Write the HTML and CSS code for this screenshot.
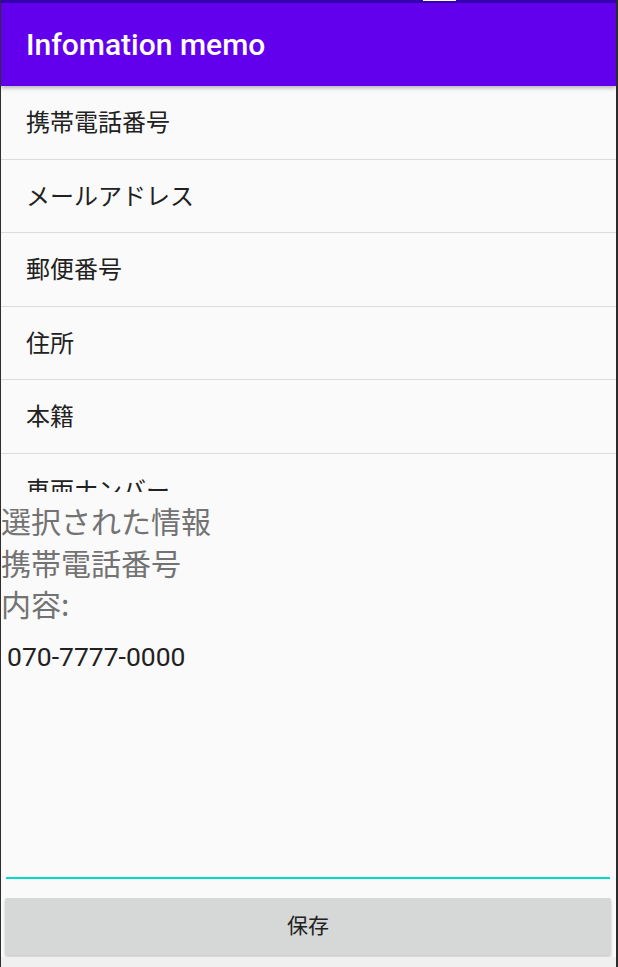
FILE: index.html
```html
<!DOCTYPE html>
<html lang="ja">
<head>
<meta charset="utf-8">
<link rel="stylesheet" href="styles.css">
</head>
<body>
<div class="frame">
  <div class="statusbar"><span class="status-mark"></span></div>
  <header class="toolbar">Infomation memo</header>
  <ul class="list">
    <li class="item">携帯電話番号</li>
    <li class="item">メールアドレス</li>
    <li class="item">郵便番号</li>
    <li class="item">住所</li>
    <li class="item">本籍</li>
    <li class="item">車両ナンバー</li>
  </ul>
  <div class="info">
    <div>選択された情報</div>
    <div>携帯電話番号</div>
    <div>内容:</div>
  </div>
  <div class="editor">
    <div class="editor-text">070-7777-0000</div>
  </div>
  <div class="actions">
    <button class="save">保存</button>
  </div>
  <div class="bottom"></div>
</div>
</body>
</html>
```
FILE: styles.css
```css
html, body {
  margin: 0;
  padding: 0;
  background: #2b2b2b;
}
.frame {
  position: relative;
  width: 615px;
  height: 967px;
  border-left: 1px solid #2e2e2e;
  border-right: 2px solid #2b2b2b;
  background: #fafafa;
  display: flex;
  flex-direction: column;
  overflow: hidden;
  font-family: Roboto, "Noto Sans CJK JP", sans-serif;
}
.statusbar {
  height: 3px;
  background: #3700b3;
  flex: none;
}
.status-mark {
  position: absolute;
  left: 422px;
  top: 0;
  width: 33px;
  height: 1px;
  background: #ffffff;
}
.toolbar {
  flex: none;
  height: 83px;
  background: #6200ee;
  color: #ffffff;
  font-family: Roboto, sans-serif;
  font-weight: 500;
  font-size: 30px;
  line-height: 83px;
  padding-left: 25px;
  box-sizing: border-box;
  box-shadow: 0 2px 4px rgba(0, 0, 0, 0.28);
  position: relative;
  z-index: 2;
}
.list {
  flex: none;
  list-style: none;
  margin: 0;
  padding: 0;
  height: 406px;
  overflow: hidden;
}
.item {
  height: 72.5px;
  box-sizing: border-box;
  padding-bottom: 3px;
  border-bottom: 1px solid #dcdcdc;
  display: flex;
  align-items: center;
  padding-left: 25px;
  font-family: "Noto Sans CJK JP", sans-serif;
  font-size: 24px;
  color: #212121;
}
.item + .item {
  height: 73.5px;
}
.item:first-child {
  height: 73.5px;
}
.info {
  flex: none;
  margin-top: 8px;
  font-family: "Noto Sans CJK JP", sans-serif;
  font-size: 30px;
  line-height: 41.5px;
  color: #737373;
}
.editor {
  flex: 1;
  margin: 0 6px 0 5px;
  border-bottom: 2px solid #03dac5;
  padding-top: 15px;
}
.editor-text {
  font-family: Roboto, sans-serif;
  font-size: 26.5px;
  line-height: 34px;
  color: #212121;
  padding-left: 1px;
}
.actions {
  flex: none;
  padding: 19px 5px 2px 4px;
}
.save {
  display: block;
  width: 100%;
  height: 57px;
  border: none;
  border-radius: 2px;
  background: #d6d7d7;
  box-shadow: 0 2px 3px rgba(0, 0, 0, 0.2);
  font-family: "Noto Sans CJK JP", sans-serif;
  font-size: 21px;
  color: #212121;
  padding: 0 0 5px 0;
}
.bottom {
  flex: none;
  height: 10px;
  background: #f0f0f0;
}
```
